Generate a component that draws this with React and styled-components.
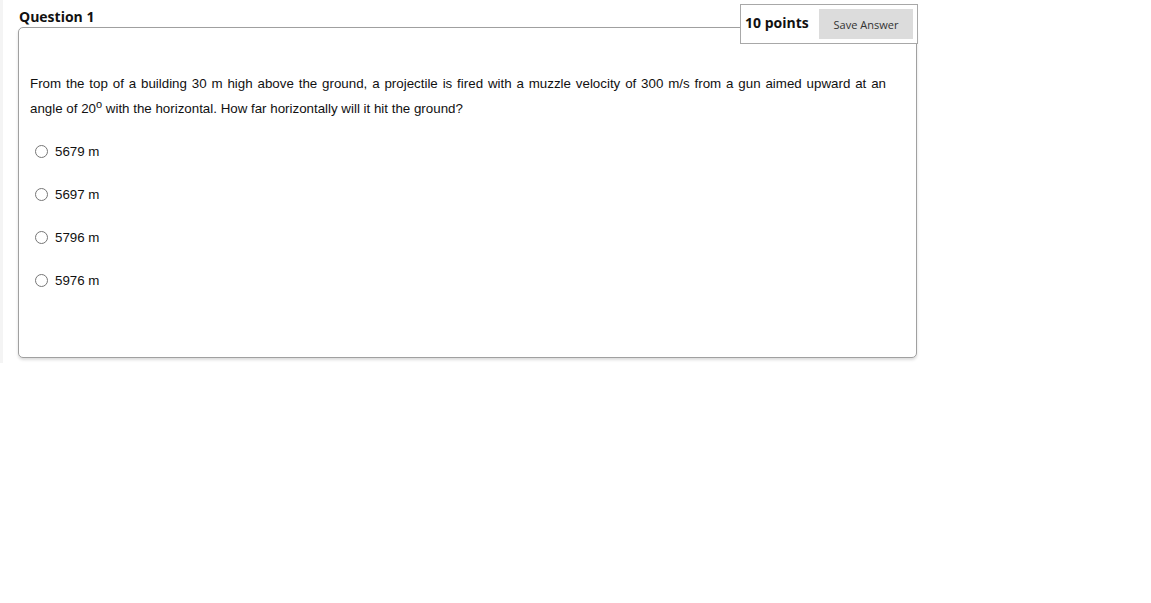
import React, { useState } from "react";
import styled, { createGlobalStyle } from "styled-components";

const Global = createGlobalStyle`
  body {
    margin: 0;
    background: #fff;
    font-family: "Liberation Sans", Arial, sans-serif;
  }
`;

const Page = styled.div`
  display: flex;
  align-items: flex-start;
`;

const Strip = styled.div`
  width: 3px;
  height: 363px;
  background: #f4f4f4;
`;

const Main = styled.div`
  padding: 4px 0 0 15px;
  width: 900px;
`;

const Header = styled.div`
  display: flex;
  justify-content: space-between;
  align-items: flex-start;
`;

const Heading = styled.h2`
  margin: 3px 0 0 1px;
  font-family: "Open Sans", sans-serif;
  font-size: 14px;
  font-weight: 700;
  line-height: 19px;
  color: #111;
`;

const PointsBox = styled.div`
  position: relative;
  z-index: 1;
  display: flex;
  align-items: center;
  gap: 10px;
  box-sizing: border-box;
  width: 178px;
  height: 40px;
  padding: 0 4px;
  background: #fff;
  border: 1px solid #a8a8a8;
`;

const Points = styled.span`
  font-family: "Open Sans", sans-serif;
  font-size: 14px;
  font-weight: 700;
  line-height: 19px;
  margin-bottom: 4px;
  color: #111;
`;

const SaveButton = styled.button`
  width: 94px;
  height: 30px;
  border: none;
  background: #dcdcdc;
  color: #333;
  font-family: "Open Sans", sans-serif;
  font-size: 11px;
  padding: 0;
  margin-left: auto;
`;

const Card = styled.div`
  box-sizing: border-box;
  width: 899px;
  height: 331px;
  margin-top: -17px;
  padding: 43px 30px 0 11px;
  border: 1px solid #a0a0a0;
  border-radius: 5px;
  box-shadow: 0 2px 3px rgba(0, 0, 0, 0.14);
  background: #fff;
`;

const Prompt = styled.p`
  margin: 0;
  font-size: 13.33px;
  line-height: 25px;
  color: #111;
  text-align: justify;

  sup {
    font-size: 11px;
    line-height: 0;
    vertical-align: 5px;
  }
`;

const Options = styled.div`
  margin-top: 9px;
  display: flex;
  flex-direction: column;
`;

const Option = styled.label`
  display: flex;
  align-items: center;
  height: 43px;
  font-size: 13.33px;
  color: #111;
`;

const Radio = styled.input`
  width: 13px;
  height: 13px;
  margin: 0 7px 0 5px;
`;

const answers = ["5679 m", "5697 m", "5796 m", "5976 m"];

const App = () => {
  const [choice, setChoice] = useState(null);

  return (
    <Page>
      <Global />
      <Strip />
      <Main>
        <Header>
          <Heading>Question 1</Heading>
          <PointsBox>
            <Points>10 points</Points>
            <SaveButton>Save Answer</SaveButton>
          </PointsBox>
        </Header>
        <Card>
          <Prompt>
            From the top of a building 30 m high above the ground, a projectile
            is fired with a muzzle velocity of 300 m/s from a gun aimed upward
            at an angle of 20<sup>o</sup> with the horizontal. How far
            horizontally will it hit the ground?
          </Prompt>
          <Options>
            {answers.map((a) => (
              <Option key={a}>
                <Radio
                  type="radio"
                  name="q1"
                  checked={choice === a}
                  onChange={() => setChoice(a)}
                />
                {a}
              </Option>
            ))}
          </Options>
        </Card>
      </Main>
    </Page>
  );
};

export default App;
